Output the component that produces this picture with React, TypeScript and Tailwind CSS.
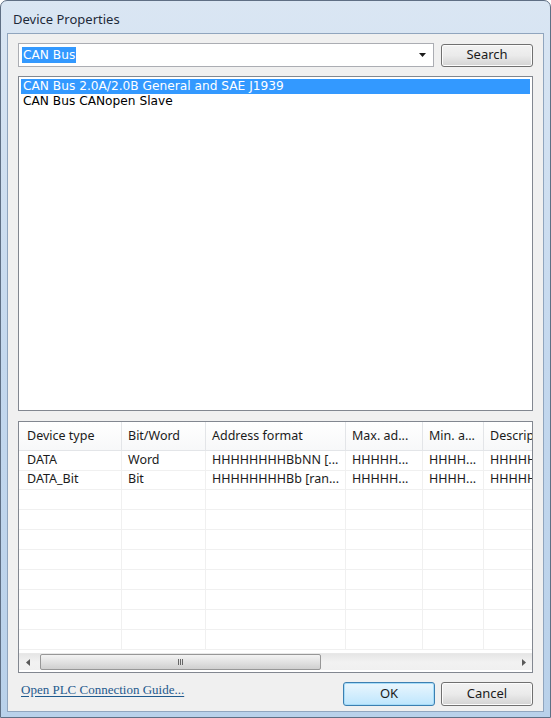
import React from 'react';

const ui = { fontFamily: '"Noto Sans", "Open Sans", sans-serif' };
const listFont = { fontFamily: '"DejaVu Sans", "Liberation Sans", sans-serif' };

const columns = [
  { title: 'Device type', w: 103, pl: 8 },
  { title: 'Bit/Word', w: 84, pl: 6 },
  { title: 'Address format', w: 140, pl: 6 },
  { title: 'Max. ad...', w: 77, pl: 6 },
  { title: 'Min. a...', w: 61, pl: 6 },
  { title: 'Descrip', w: 60, pl: 6 },
];

const rows = [
  ['DATA', 'Word', 'HHHHHHHHBbNN [...', 'HHHHH...', 'HHHH...', 'HHHHH'],
  ['DATA_Bit', 'Bit', 'HHHHHHHHBb [ran...', 'HHHHH...', 'HHHH...', 'HHHHH'],
];

function Button({ label, focused }: { label: string; focused?: boolean }) {
  return (
    <div
      className={`w-[92px] h-[24px] rounded-[3px] border flex items-center justify-center text-[13px] text-[#1b1b1b] ${
        focused
          ? 'border-[#3c7fb1] bg-gradient-to-b from-[#eaf6fd] to-[#bee6fd] shadow-[inset_0_0_0_1px_#a6dcf8]'
          : 'border-[#707070] bg-gradient-to-b from-[#f2f2f2] via-[#ebebeb] to-[#d3d3d3] shadow-[inset_0_0_0_1px_#fcfcfc]'
      }`}
    >
      {label}
    </div>
  );
}

export default function App() {
  const blank = Array.from({ length: 8 });
  return (
    <div className="w-[551px] h-[718px] overflow-hidden" style={ui}>
      <div className="w-full h-full flex flex-col rounded-t-[7px] border border-[#5f6f84] bg-gradient-to-b from-[#dae6f3] via-[#c4d8ee] to-[#b9d1ea]">
        {/* title bar */}
        <div className="h-[32px] shrink-0 flex items-center pl-[12px] pt-[5px] text-[13px] text-[#1e2a3a]">
          Device Properties
        </div>

        {/* client area */}
        <div className="flex-1 mx-[6px] mb-[7px] flex flex-col bg-[#f0f0f0] border border-[#90a5be] px-[10px] pt-[9px] pb-[3px]">
          {/* search row */}
          <div className="flex items-center gap-[7px] h-[24px]">
            <div className="flex-1 h-[24px] bg-white border border-[#abadb3] flex items-center pl-[3px] pr-[6px]">
              <span className="bg-[#3399ff] text-white text-[12.2px] leading-[16px] px-[1px]" style={listFont}>
                CAN Bus
              </span>
              <div className="flex-1" />
              <svg width="8" height="5" viewBox="0 0 8 5">
                <path d="M0 0 L7 0 L3.5 4 Z" fill="#1b1b1b" />
              </svg>
            </div>
            <div className="w-[92px] h-[23px] rounded-[3px] border border-[#707070] bg-gradient-to-b from-[#f2f2f2] via-[#ebebeb] to-[#d3d3d3] shadow-[inset_0_0_0_1px_#fcfcfc] flex items-center justify-center text-[13px] text-[#1b1b1b]">
              Search
            </div>
          </div>

          {/* device list */}
          <div className="mt-[9px] h-[335px] shrink-0 bg-white border border-[#828790] p-[2px] text-[12.2px] leading-[15px]" style={listFont}>
            <div className="bg-[#3399ff] text-white pl-[2px]">CAN Bus 2.0A/2.0B General and SAE J1939</div>
            <div className="text-black pl-[2px]">CAN Bus CANopen Slave</div>
          </div>

          {/* property table */}
          <div className="mt-[10px] h-[252px] shrink-0 bg-white border border-[#828790] flex flex-col overflow-hidden text-[12.5px] text-[#1b1b1b]">
            <div className="h-[29px] shrink-0 flex bg-gradient-to-b from-white to-[#f7f8f9] border-b border-[#e3e5e8]">
              {columns.map((c, i) => (
                <div
                  key={i}
                  className="shrink-0 flex items-center pt-[1px] whitespace-nowrap overflow-hidden border-r border-[#e3e5e8]"
                  style={{ width: c.w, paddingLeft: c.pl }}
                >
                  {c.title}
                </div>
              ))}
            </div>
            <div className="flex-1 overflow-hidden">
              {rows.map((r, ri) => (
                <div key={ri} className="h-[19.5px] flex border-b border-[#f0f0f0]">
                  {r.map((cell, ci) => (
                    <div
                      key={ci}
                      className="shrink-0 flex items-center whitespace-nowrap overflow-hidden border-r border-[#f0f0f0]"
                      style={{ width: columns[ci].w, paddingLeft: columns[ci].pl }}
                    >
                      {cell}
                    </div>
                  ))}
                </div>
              ))}
              {blank.map((_, bi) => (
                <div key={bi} className="h-[20px] flex border-b border-[#f0f0f0]">
                  {columns.map((c, ci) => (
                    <div key={ci} className="shrink-0 border-r border-[#f0f0f0]" style={{ width: c.w }} />
                  ))}
                </div>
              ))}
            </div>
            {/* horizontal scrollbar */}
            <div className="h-[17px] shrink-0 flex items-center bg-gradient-to-b from-[#e6e6e6] via-[#f2f2f2] to-[#f0f0f0] border-t border-[#e8e8e8] mb-[2px]">
              <div className="w-[17px] h-full flex items-center justify-center">
                <svg width="4" height="7" viewBox="0 0 4 7">
                  <path d="M4 0 L4 7 L0 3.5 Z" fill="#5a5a5a" />
                </svg>
              </div>
              <div className="ml-[4px] w-[281px] h-[16px] rounded-[2px] border border-[#979797] bg-gradient-to-b from-[#f3f3f3] via-[#e2e2e2] to-[#cfcfcf] flex items-center justify-center">
                <div className="flex gap-[1px]">
                  <div className="w-[1px] h-[6px] bg-[#666]" />
                  <div className="w-[1px] h-[6px] bg-[#666]" />
                  <div className="w-[1px] h-[6px] bg-[#666]" />
                </div>
              </div>
              <div className="flex-1" />
              <div className="w-[17px] h-full flex items-center justify-center">
                <svg width="4" height="7" viewBox="0 0 4 7">
                  <path d="M0 0 L0 7 L4 3.5 Z" fill="#5a5a5a" />
                </svg>
              </div>
            </div>
          </div>

          {/* footer */}
          <div className="mt-[7px] flex items-center">
            <span
              className="pl-[3px] pb-[8px] text-[13px] text-[#1f5a8e] underline underline-offset-2"
              style={{ fontFamily: '"Liberation Serif", serif' }}
            >
              Open PLC Connection Guide...
            </span>
            <div className="flex-1" />
            <div className="flex gap-[6px]">
              <Button label="OK" focused />
              <Button label="Cancel" />
            </div>
          </div>
        </div>
      </div>
    </div>
  );
}
